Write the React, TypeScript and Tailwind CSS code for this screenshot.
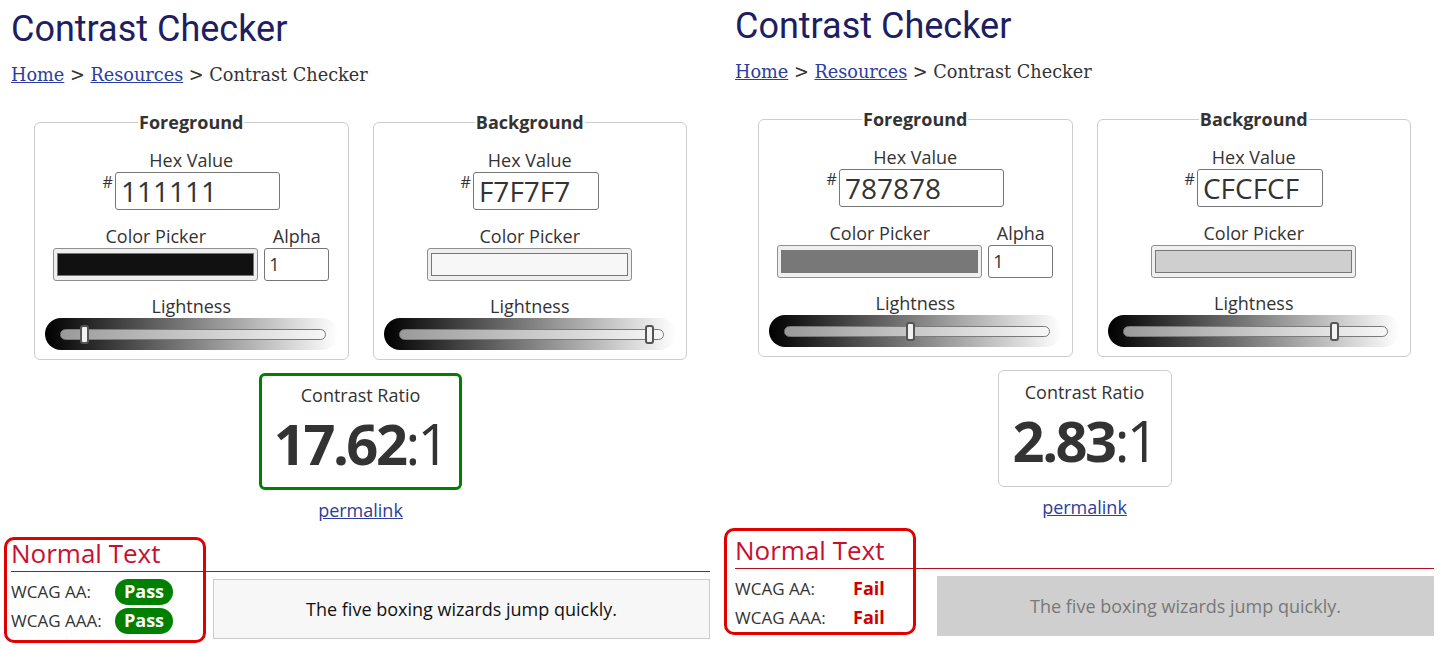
import React from "react";

type FieldData = {
  title: string;
  hex: string;
  swatch: string;
  thumb: string;
  alpha: boolean;
  inputW: string;
};

function Slider({ thumb }: { thumb: string }) {
  return (
    <div className="relative flex h-[32px] w-full items-center rounded-full bg-[linear-gradient(to_right,#000000,#ffffff)] pl-[15px] pr-[12px]">
      <div className="h-[11px] flex-1 rounded-full border border-[#7a7a7a] bg-[linear-gradient(to_right,#9a9a9a,#f7f7f7)]" />
      <div className={"absolute top-[7px] h-[19px] w-[9px] rounded-[3px] border-2 border-[#555555] bg-[#f2f2f2] " + thumb} />
    </div>
  );
}

function Field({ d }: { d: FieldData }) {
  return (
    <fieldset className="rounded-[6px] border border-[#cccccc] px-[10px] pb-[9px] text-center">
      <legend className="mx-auto px-[1px] text-[18px] font-bold leading-[24px] text-[#333333]">{d.title}</legend>
      <div className="mt-[14px] h-[24px] leading-[24px]">Hex Value</div>
      <div className="flex justify-center">
        <span className="mr-[2px] text-[16px] leading-[20px]">#</span>
        <div className={"h-[38px] rounded-[3px] border border-[#767676] bg-white pl-[5px] text-left text-[28px] leading-[36px] text-[#333333] " + d.inputW}>
          {d.hex}
        </div>
      </div>
      <div className="mt-[14px] flex justify-center gap-[6px]">
        <div className="flex flex-col items-center">
          <div className="h-[24px] leading-[24px]">Color Picker</div>
          <div className="h-[33px] w-[205px] rounded-[3px] border border-[#8f8f8f] bg-[#efefef] px-[3px] py-[4px]">
            <div className={"h-full w-full border border-[#777777] " + d.swatch} />
          </div>
        </div>
        {d.alpha && (
          <div className="flex flex-col items-center">
            <div className="h-[24px] leading-[24px]">Alpha</div>
            <div className="h-[33px] w-[65px] rounded-[3px] border border-[#767676] bg-white pl-[4px] text-left text-[18px] leading-[31px] text-[#333333]">
              1
            </div>
          </div>
        )}
      </div>
      <div className="mt-[13px] h-[24px] leading-[24px]">Lightness</div>
      <Slider thumb={d.thumb} />
    </fieldset>
  );
}

type PanelData = {
  fg: FieldData;
  bg: FieldData;
  ratioBold: string;
  pass: boolean;
  boxCls: string;
  sampleCls: string;
  noteCls: string;
};

function Panel({ p }: { p: PanelData }) {
  return (
    <div className="relative w-[699px] shrink-0 font-['Open_Sans',sans-serif] text-[18px] text-[#333333]">
      <h1 className="mt-[4px] h-[44px] font-['Roboto',sans-serif] text-[36px] leading-[44px] text-[#1d2060]">
        Contrast Checker
      </h1>
      <nav className="mt-[12px] h-[24px] font-['DejaVu_Serif',serif] text-[17.7px] leading-[24px] text-[#333333]">
        <a className="text-[#2b3d9e] underline">Home</a> &gt;{" "}
        <a className="text-[#2b3d9e] underline">Resources</a> &gt; Contrast Checker
      </nav>
      <div className="mt-[23px] grid grid-cols-2 gap-[24px] px-[23px]">
        <Field d={p.fg} />
        <Field d={p.bg} />
      </div>
      <div className="mt-[13px] flex justify-center">
        <div className={"flex h-[117px] flex-col items-center rounded-[6px] " + p.boxCls}>
          <div className="h-[18px] leading-[18px]">Contrast Ratio</div>
          <div className="mt-[11px] h-[56px] text-[56px] leading-[56px] tracking-[-2.5px] text-[#333333]">
            <span className="font-bold">{p.ratioBold}</span>:1
          </div>
        </div>
      </div>
      <div className="mt-[8px] h-[24px] text-center leading-[24px]">
        <a className="text-[#2b3d9e] underline">permalink</a>
      </div>
      <div className="relative mt-[17px]">
        <h2 className="h-[33px] border-b border-[#b3101e] text-[26px] leading-[29px] text-[#c8102e]">Normal Text</h2>
        <div className="flex">
          <div className="w-[202px] pt-[5px] text-[17px]">
            {["WCAG AA:", "WCAG AAA:"].map((l) => (
              <div key={l} className="flex h-[29px] items-center">
                <span className="w-[104px]">{l}</span>
                {p.pass ? (
                  <span className="flex h-[26px] w-[58px] items-center justify-center rounded-full bg-[#008000] text-[18px] font-bold text-white">
                    Pass
                  </span>
                ) : (
                  <span className="w-[58px] pl-[14px] text-[18px] font-bold text-[#cc0000]">Fail</span>
                )}
              </div>
            ))}
          </div>
          <div className={"mt-[7px] flex h-[60px] flex-1 items-center justify-center border text-[18px] " + p.sampleCls}>
            The five boxing wizards jump quickly.
          </div>
        </div>
        <div className={"absolute rounded-[10px] border-[3px] border-[#e00000] " + p.noteCls} />
      </div>
    </div>
  );
}

const left: PanelData = {
  fg: { title: "Foreground", hex: "111111", swatch: "bg-[#111111]", thumb: "left-[35px]", alpha: true, inputW: "w-[165px]" },
  bg: { title: "Background", hex: "F7F7F7", swatch: "bg-[#f7f7f7]", thumb: "left-[261px]", alpha: false, inputW: "w-[126px]" },
  ratioBold: "17.62",
  pass: true,
  boxCls: "w-[203px] border-[3px] border-[#008000] pt-[10px]",
  sampleCls: "border-[#cccccc] bg-[#f7f7f7] text-[#111111]",
  noteCls: "left-[-7px] top-[-2px] h-[106px] w-[202px]",
};

const right: PanelData = {
  fg: { title: "Foreground", hex: "787878", swatch: "bg-[#787878]", thumb: "left-[137px]", alpha: true, inputW: "w-[165px]" },
  bg: { title: "Background", hex: "CFCFCF", swatch: "bg-[#cfcfcf]", thumb: "left-[222px]", alpha: false, inputW: "w-[126px]" },
  ratioBold: "2.83",
  pass: false,
  boxCls: "w-[174px] border border-[#cccccc] pt-[12px]",
  sampleCls: "border-[#cfcfcf] bg-[#cfcfcf] text-[#787878]",
  noteCls: "left-[-11px] top-[-8px] h-[107px] w-[192px]",
};

export default function App() {
  return (
    <div className="flex h-[651px] w-[1440px] overflow-hidden bg-white">
      <div className="w-[724px] shrink-0 pl-[11px] pt-[3px]">
        <Panel p={left} />
      </div>
      <div className="w-[716px] shrink-0 pl-[11px]">
        <Panel p={right} />
      </div>
    </div>
  );
}
